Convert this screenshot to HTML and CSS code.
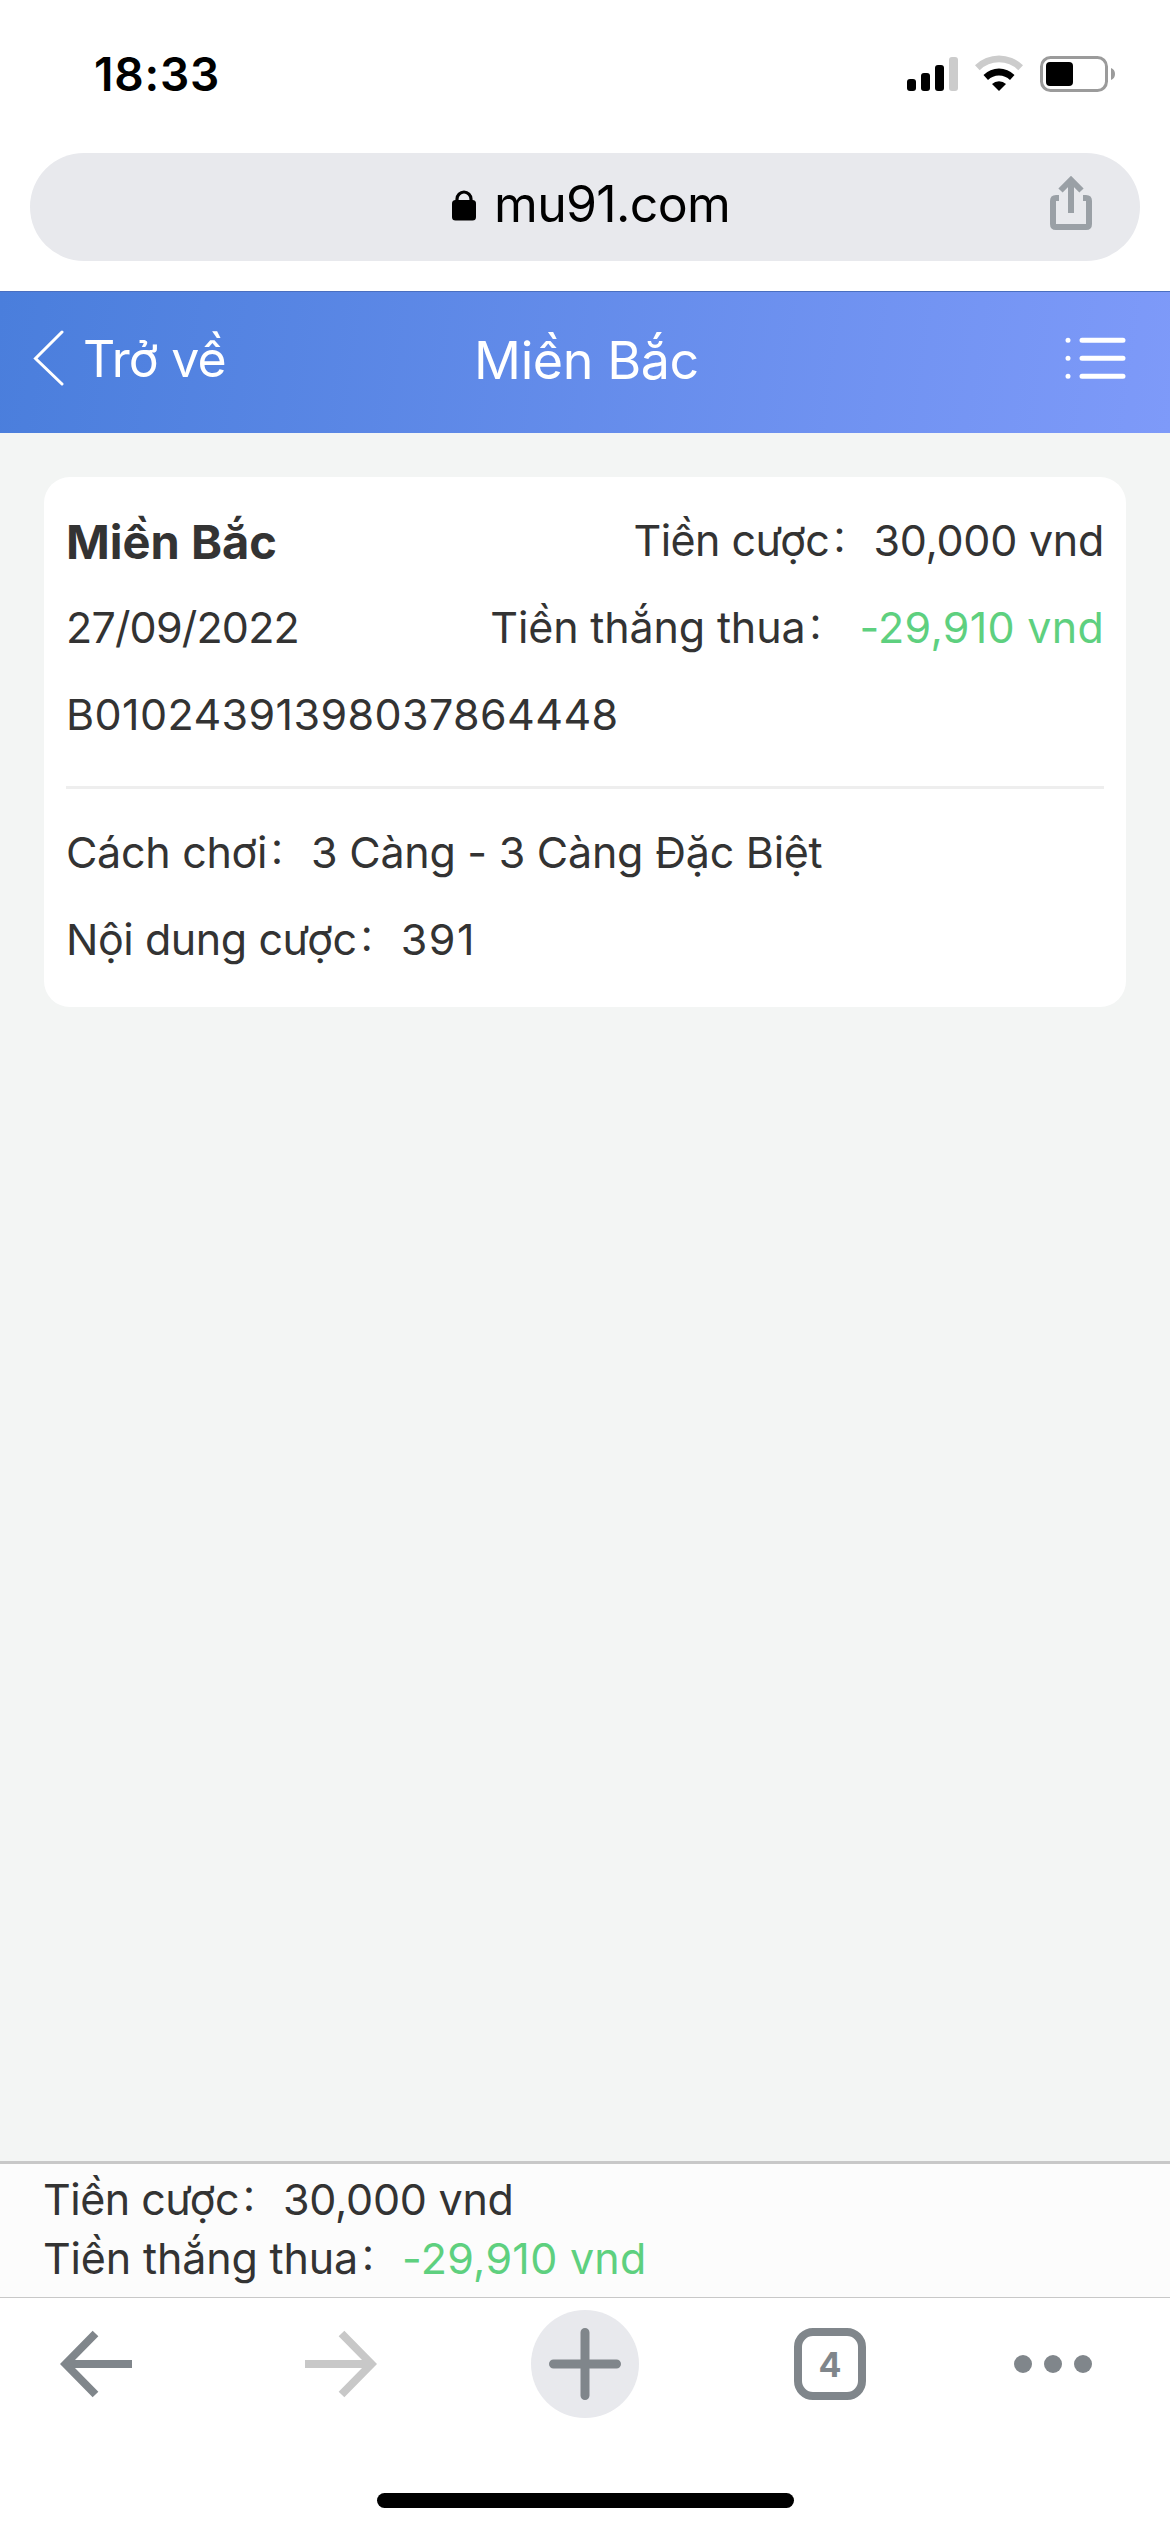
FILE: index.html
```html
<!DOCTYPE html>
<html lang="vi">
<head>
<meta charset="utf-8">
<title>Miền Bắc</title>
<link rel="stylesheet" href="styles.css">
</head>
<body>
<div class="status">
  <span class="time">18:33</span>
  <div class="status-icons">
    <svg width="52" height="36" viewBox="0 0 52 36"><rect x="0" y="23" width="9" height="12" rx="3"/><rect x="14" y="17" width="9" height="18" rx="3"/><rect x="28" y="9" width="9" height="26" rx="3"/><rect x="42" y="1" width="9" height="34" rx="3" fill="#ccc"/></svg>
    <svg class="wifi" width="50" height="37" viewBox="0 0 50 37"><path d="M1 10.200 A34.500 34.500 0 0 1 49 10.200 L44.300 15.200 A27.500 27.500 0 0 0 5.700 15.200 Z" fill="#ccc"/><path d="M9.500 20 A22 22 0 0 1 40.500 20 L36 25 A15.500 15.500 0 0 0 14 25 Z"/><path d="M18 29 A10 10 0 0 1 32 29 L25 36 Z"/></svg>
    <svg class="battery" width="76" height="38" viewBox="0 0 76 38"><rect x="1.500" y="2.500" width="65" height="33" rx="9" fill="none" stroke="#9b9b9b" stroke-width="3"/><rect x="6" y="7" width="27" height="24" rx="4"/><path d="M71 13 A6.500 6.500 0 0 1 71 25 Z" fill="#9b9b9b"/></svg>
  </div>
</div>
<div class="address">
  <svg width="24" height="31" viewBox="0 0 24 31"><path d="M5 13 V9 A7 7 0 0 1 19 9 V13" fill="none" stroke="#000" stroke-width="3.200"/><rect y="10" width="24" height="20.500" rx="3.500"/></svg>
  <span class="host">mu91.com</span>
  <svg class="share" width="42" height="54" viewBox="0 0 42 54" fill="none" stroke="#9aa0a6" stroke-width="6"><path d="M9 22 H6 Q3 22 3 25 V48 Q3 51 6 51 H36 Q39 51 39 48 V25 Q39 22 36 22 H33"/><path d="M21 37 V5"/><path d="M10.500 14.500 L21 4 L31.500 14.500"/></svg>
</div>
<header class="header">
  <a class="back"><svg width="32" height="56" viewBox="0 0 32 56"><path d="M29 2 L2.500 28.500 L29 54" fill="none" stroke="#fff" stroke-width="3" stroke-linecap="round"/></svg><span>Trở về</span></a>
  <h1 class="title">Miền Bắc</h1>
  <svg class="menu" width="62" height="42" viewBox="0 0 62 42" fill="none" stroke="#fff" stroke-width="5" stroke-linecap="round"><path d="M4 3.300 h.01 M4 21.300 h.01 M4 39.300 h.01"/><path d="M18 3.300 H59 M18 21.300 H59 M18 39.300 H59"/></svg>
</header>
<main class="content">
  <section class="card">
    <div class="row"><strong class="name">Miền Bắc</strong><div><span class="t-bet">Tiền cược</span><span class="colon">：</span><span class="v-bet">30,000 vnd</span></div></div>
    <div class="row"><span class="date">27/09/2022</span><div class="win"><span class="t-win">Tiền thắng thua</span><span class="colon">：</span><span class="v-win loss">-29,910 vnd</span></div></div>
    <div class="row"><span class="order">B01024391398037864448</span></div>
    <hr class="divider">
    <div class="row"><div><span class="t-play">Cách chơi</span><span class="colon">：</span><span class="v-play">3 Càng - 3 Càng Đặc Biệt</span></div></div>
    <div class="row"><div><span class="t-body">Nội dung cược</span><span class="colon">：</span><span class="v-body">391</span></div></div>
  </section>
</main>
<footer class="summary">
  <div><span class="t-bet">Tiền cược</span><span class="colon">：</span><span class="v-bet">30,000 vnd</span></div>
  <div><span class="t-win">Tiền thắng thua</span><span class="colon">：</span><span class="v-win loss">-29,910 vnd</span></div>
</footer>
<nav class="toolbar">
  <svg width="72" height="72" viewBox="0 0 72 72" fill="none" stroke="#80868b" stroke-width="8"><path d="M72 36 H8"/><path d="M35.500 5.500 L5.500 36 L35.500 66.500"/></svg>
  <svg class="forward" width="72" height="72" viewBox="0 0 72 72" fill="none" stroke="#c8c8c8" stroke-width="8"><path d="M0 36 H64"/><path d="M36.500 5.500 L66.500 36 L36.500 66.500"/></svg>
  <div class="plus"><svg width="72" height="72" viewBox="0 0 72 72" stroke="#80868b" stroke-width="9" stroke-linecap="round"><path d="M4.500 36 H67.500 M36 4.500 V67.500"/></svg></div>
  <div class="tabs">4</div>
  <svg class="more" width="78" height="18" viewBox="0 0 78 18" fill="#80868b"><circle cx="9" cy="9" r="9"/><circle cx="39" cy="9" r="9"/><circle cx="69" cy="9" r="9"/></svg>
</nav>
<div class="home"></div>
</body>
</html>
```

FILE: styles.css
```css
* { box-sizing: border-box; }
body {
  margin: 0;
  width: 1170px;
  height: 2532px;
  display: flex;
  flex-direction: column;
  overflow: hidden;
  background: #fff;
  color: #333;
  font: 400 43px/87px Inter, "Noto Sans CJK SC", sans-serif;
  white-space: nowrap;
}
svg { display: block; flex: none; }

.status {
  height: 153px;
  padding: 55px 54px 0 94px;
  display: flex;
  justify-content: space-between;
  color: #000;
}
.time { font-size: 46px; font-weight: 600; line-height: 38px; letter-spacing: .8px; }
.status-icons { display: flex; }
.status-icons svg { margin-top: 1px; }
.status-icons .wifi { margin: 0 16px 0 15px; }
.status-icons .battery { margin-top: 0; }

.address {
  height: 108px;
  margin: 0 30px;
  padding: 0 48px 0 422px;
  border-radius: 54px;
  background: #e8e9ed;
  display: flex;
  align-items: center;
  color: #000;
}
.address svg { margin-top: -4px; }
.host { margin-left: 18px; font-size: 50px; line-height: 108px; letter-spacing: -.67px; padding-bottom: 6px; }
.address .share { margin: -8px 0 0 auto; }

.header {
  height: 142px;
  margin-top: 30px;
  padding: 0 33px;
  border-top: 1px solid #4a6fc0;
  background: linear-gradient(98deg, #4a7edc, #7e9af9);
  display: grid;
  grid-template-columns: 1fr auto 1fr;
  color: #fff;
}
.back { display: flex; gap: 18px; font-size: 50px; line-height: 135px; letter-spacing: -.79px; }
.back svg { margin-top: 38px; }
.title { margin: 0; padding-left: 3px; font-size: 52px; font-weight: 400; line-height: 138px; letter-spacing: -.42px; }
.menu { justify-self: end; margin: 45px 11px 0 0; }

.content { flex: 1; padding: 44px; background: #f3f5f4; }
.card { height: 530px; padding: 20px 22px 24px; border-radius: 26px; background: #fff; }
.row { height: 87px; display: flex; justify-content: space-between; align-items: flex-start; }
.name { font-size: 47px; font-weight: 700; padding-top: 1px; }
.divider { height: 3px; margin: 28px 0 20px; border: 0; background: #eee; }
.colon { display: inline-block; width: 44px; padding-left: 1px; font-size: 36px; line-height: 1; vertical-align: 4px; }
.loss { color: #5ed07f; }
.win .colon { width: 54px; }
.t-bet { letter-spacing: -.52px; }
.v-bet { letter-spacing: -.27px; }
.t-win { letter-spacing: -.15px; }
.v-win { letter-spacing: .28px; }
.date { letter-spacing: -.82px; }
.order { letter-spacing: .39px; }
.t-play { letter-spacing: -.29px; }
.v-play { letter-spacing: -.26px; }
.t-body { letter-spacing: -.43px; }
.v-body { letter-spacing: 1.5px; }

.summary {
  height: 137px;
  padding: 6px 43px 0;
  border-top: 3px solid #c8c8c8;
  border-bottom: 1px solid #c8c8c8;
  background: #fcfcfc;
  line-height: 59px;
}

.toolbar {
  height: 132px;
  padding-left: 60px;
  display: flex;
  align-items: center;
}
.forward { margin-left: 173px; }
.plus {
  width: 108px;
  height: 108px;
  margin: 0 155px 0 154px;
  border-radius: 50%;
  background: #e8e9ed;
  display: flex;
  align-items: center;
  justify-content: center;
}
.tabs {
  width: 72px;
  height: 72px;
  border: 8px solid #80868b;
  border-radius: 19px;
  color: #80868b;
  font-size: 34px;
  font-weight: 700;
  line-height: 57px;
  text-align: center;
}
.more { margin-left: 148px; }
.home { width: 417px; height: 15px; margin: 63px auto 24px; border-radius: 8px; background: #000; flex: none; }
```
